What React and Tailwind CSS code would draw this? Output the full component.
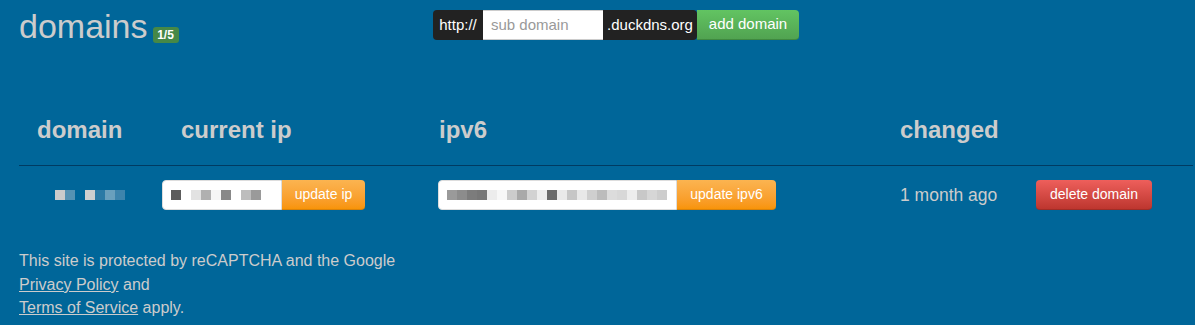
import React from "react";

const font = { fontFamily: '"Liberation Sans", Arial, Helvetica, sans-serif' };

function Blocks({ colors }) {
  return (
    <div className="flex">
      {colors.map((c, i) => (
        <div key={i} className="w-[10px] h-[10px]" style={{ backgroundColor: c }} />
      ))}
    </div>
  );
}

export default function App() {
  const domainBlocks = ["#cbcbcb", "#5592b3", "transparent", "#cfcfcf", "#2b7aa5", "#6aa0bd", "#3d84ac"];
  const ipBlocks = ["#5c5c5c", "transparent", "#e2e2e2", "#b0b0b0", "#f6f6f6", "#888888", "transparent", "#bdbdbd", "#9a9a9a"];
  const ipv6Blocks = [
    "#9a9a9a", "#8c8c8c", "#7c7c7c", "#777777", "#ececec", "#f7f7f7", "#cccccc", "#a9a9a9",
    "#d2d2d2", "#ededed", "#6a6a6a", "#e9e9e9", "#c6c6c6", "#e8e8e8", "#cfcfcf", "#bcbcbc",
    "#dcdcdc", "#d8d8d8", "#ededed", "#c8c8c8", "#d6d6d6", "#cdcdcd",
  ];

  return (
    <div className="w-[1195px] h-[325px] bg-[#006699] text-[#cccccc] overflow-hidden" style={font}>
      {/* top bar */}
      <div className="flex items-start pt-[6px] pl-[19px]">
        <div className="w-[414px] flex items-start">
          <h1 className="text-[34px] leading-[40px] font-normal text-[#cccccc]">domains</h1>
          <span className="ml-[5px] mt-[21px] h-[16px] w-[26px] flex items-center justify-center rounded-[3px] bg-[#468847] text-white text-[12px] font-bold leading-[16px]">
            1/5
          </span>
        </div>
        <div className="mt-[4px] flex h-[30px] text-[15px]">
          <div className="flex items-center justify-center w-[50px] bg-[#222222] text-white rounded-l-[4px]">http://</div>
          <div className="flex items-center w-[120px] bg-white border-y border-[#cccccc] pl-[8px] text-[#999999]">sub domain</div>
          <div className="flex items-center justify-center w-[94px] bg-[#222222] text-white rounded-r-[4px]">.duckdns.org</div>
          <div className="flex items-center justify-center w-[102px] text-white rounded-r-[4px] bg-gradient-to-b from-[#62c462] to-[#51a351] border-b border-[#3f8a3f]">
            add domain
          </div>
        </div>
      </div>

      {/* table */}
      <div className="ml-[19px] w-[1174px] mt-[55px]">
        <div className="grid grid-cols-[143px_276px_462px_136px_1fr] h-[65px] items-end pb-[23px] border-b border-[#003b62] text-[24px] font-bold leading-[24px]">
          <div className="pl-[18px]">domain</div>
          <div className="pl-[19px]">current ip</div>
          <div className="pl-[1px]">ipv6</div>
          <div>changed</div>
          <div></div>
        </div>
        <div className="grid grid-cols-[143px_276px_462px_136px_1fr] items-center pt-[14px]">
          <div className="pl-[36px] self-start pt-[10px]">
            <Blocks colors={domainBlocks} />
          </div>
          <div className="flex h-[30px]">
            <div className="w-[120px] bg-white rounded-l-[4px] border border-[#dddddd] flex items-center pl-[8px]">
              <Blocks colors={ipBlocks} />
            </div>
            <div className="w-[83px] flex items-center justify-center text-white text-[14px] rounded-r-[4px] bg-gradient-to-b from-[#fbb450] to-[#f89406] border-b border-[#d9820a]">
              update ip
            </div>
          </div>
          <div className="flex h-[30px]">
            <div className="w-[239px] bg-white rounded-l-[4px] border border-[#dddddd] flex items-center pl-[8px]">
              <Blocks colors={ipv6Blocks} />
            </div>
            <div className="w-[99px] flex items-center justify-center text-white text-[14px] rounded-r-[4px] bg-gradient-to-b from-[#fbb450] to-[#f89406] border-b border-[#d9820a]">
              update ipv6
            </div>
          </div>
          <div className="text-[17.5px] leading-[30px]">1 month ago</div>
          <div>
            <div className="w-[116px] h-[30px] flex items-center justify-center text-white text-[14px] rounded-[4px] bg-gradient-to-b from-[#ee5f5b] to-[#bd362f] border-b border-[#a12d27]">
              delete domain
            </div>
          </div>
        </div>
      </div>

      {/* footer */}
      <div className="ml-[19px] mt-[39px] text-[16px] leading-[23.5px] text-[#cccccc]">
        <div>This site is protected by reCAPTCHA and the Google</div>
        <div>
          <span className="underline">Privacy Policy</span> and
        </div>
        <div>
          <span className="underline">Terms of Service</span> apply.
        </div>
      </div>
    </div>
  );
}
